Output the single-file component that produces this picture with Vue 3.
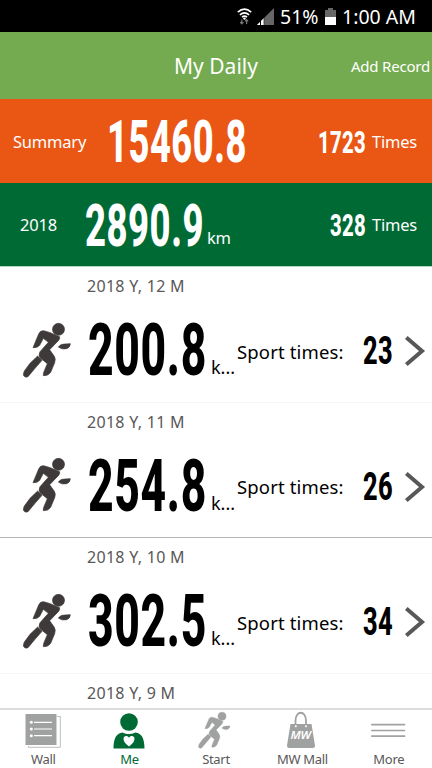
<template>
  <div class="screen">
    <div class="status-bar">
      <svg class="wifi" width="15" height="17" viewBox="0 0 15 17">
        <g fill="none" stroke="#fff" stroke-width="1.6">
          <path d="M0.8 4.2 Q7.5 -1.8 14.2 4.2" />
          <path d="M2.9 6.8 Q7.5 2.8 12.1 6.8" />
          <path d="M5 9.2 Q7.5 7.1 10 9.2" />
        </g>
        <circle cx="7.5" cy="10.6" r="1.2" fill="#fff" />
        <path d="M4.8 11.5V15.6M3.2 14L4.8 15.8L6.4 14M9.6 16V12M8 13.4L9.6 11.6L11.2 13.4" fill="none" stroke="#777" stroke-width="1.2" />
      </svg>
      <svg class="signal" width="17" height="17" viewBox="0 0 17 17">
        <path d="M0 17L17 0V17Z" fill="#666" />
        <path d="M0 17L8 9V17Z" fill="#fff" />
        <path d="M3.5 10V17M7.2 8V17" stroke="#000" stroke-width="1" />
      </svg>
      <span class="battery-level">51%</span>
      <svg class="battery" width="11" height="17" viewBox="0 0 11 17">
        <path d="M3 0H8V2H11V17H0V2H3Z" fill="#666" />
        <rect y="9" width="11" height="8" fill="#fff" />
      </svg>
      <span class="clock">1:00 AM</span>
    </div>

    <header class="header">
      <h1>My Daily</h1>
      <span class="add-record">Add Record</span>
    </header>

    <section v-for="total in totals" :key="total.label" :class="['total', total.theme]">
      <span class="total-label">{{ total.label }}</span>
      <svg class="total-distance" :width="total.width" height="44">
        <text x="0" y="43" :textLength="total.width" lengthAdjust="spacingAndGlyphs">{{ total.distance }}</text>
      </svg>
      <span class="total-unit">{{ total.unit }}</span>
      <svg class="total-count" :width="total.countWidth" height="25">
        <text x="0" y="24" :textLength="total.countWidth" lengthAdjust="spacingAndGlyphs">{{ total.count }}</text>
      </svg>
      <span class="total-times">Times</span>
    </section>

    <main class="months">
      <article v-for="month in months" :key="month.name" class="month">
        <h2>{{ month.name }}</h2>
        <div v-if="month.distance" class="month-body">
          <svg class="runner" width="48" height="55" viewBox="68 172 144 165">
            <circle cx="174.5" cy="191" r="18" />
            <path :d="runner" />
          </svg>
          <svg class="distance" width="119" height="54">
            <text x="0" y="53" textLength="119" lengthAdjust="spacingAndGlyphs">{{ month.distance }}</text>
          </svg>
          <span class="unit">k...</span>
          <span class="sport-times">Sport times:</span>
          <svg class="count" width="30" height="30">
            <text x="0" y="29" textLength="30" lengthAdjust="spacingAndGlyphs">{{ month.count }}</text>
          </svg>
          <svg class="chevron" width="20" height="30" viewBox="0 0 20 30">
            <path d="M1.3 1.5L17 15L1.3 28.5" />
          </svg>
        </div>
      </article>
    </main>

    <nav class="tabs">
      <a class="tab">
        <svg width="48" height="40" viewBox="0 0 48 40">
          <path d="M9.5 36V37.3H41.3V6.5H38" fill="none" stroke="#b5b5b5" stroke-width="0.9" />
          <rect x="6.5" y="4" width="31" height="31" />
          <path d="M15 12.3H33M15 19H33M15 25.7H33" stroke="#fff" stroke-width="1.2" />
          <g fill="#fff">
            <circle cx="12.3" cy="12.3" r="1.5" />
            <circle cx="12.3" cy="19" r="1.5" />
            <circle cx="12.3" cy="25.7" r="1.5" />
          </g>
        </svg>
        <span>Wall</span>
      </a>
      <a class="tab active">
        <svg width="48" height="40" viewBox="0 0 48 40">
          <circle cx="23" cy="12" r="8.8" />
          <path d="M7.5 38.5C7.5 27.5 11 23 16.5 22.5C21 24.5 25 24.5 29.5 22.5C35 23 38.5 27.5 38.5 38.5Z" />
          <path d="M23 36.5C19.5 34 17.5 31.5 17.5 28.8C17.5 25.3 21.8 25.3 23 27.8C24.2 25.3 28.5 25.3 28.5 28.8C28.5 31.5 26.5 34 23 36.5Z" fill="#fff" />
        </svg>
        <span>Me</span>
      </a>
      <a class="tab">
        <svg class="tab-runner" width="48" height="40" viewBox="0 0 48 40">
          <g transform="translate(-8.9 -36.3) scale(0.223)">
            <circle cx="174.5" cy="191" r="18" />
            <path :d="runner" />
          </g>
        </svg>
        <span>Start</span>
      </a>
      <a class="tab">
        <svg width="48" height="40" viewBox="0 0 48 40">
          <path d="M17.5 17V11C17.5 0 28 0 28 11V17" fill="none" stroke="#a0a1a1" stroke-width="1.8" />
          <path d="M12.5 14H33.5L37 35.5Q37 38 34.5 38H11.5Q9 38 9 35.5Z" />
          <circle cx="17.8" cy="16.2" r="1" fill="#fff" />
          <circle cx="28" cy="16.2" r="1" fill="#fff" />
          <text class="bag-text" x="12.5" y="29" textLength="20" lengthAdjust="spacingAndGlyphs">MW</text>
        </svg>
        <span>MW Mall</span>
      </a>
      <a class="tab">
        <svg width="48" height="40" viewBox="0 0 48 40">
          <path d="M6.2 14.7H40.2M6.2 20.5H40.2M6.2 26.2H40.2" stroke="#a0a1a1" stroke-width="1.7" />
        </svg>
        <span>More</span>
      </a>
    </nav>
  </div>
</template>

<script setup>
const totals = [
  { label: 'Summary', distance: '15460.8', width: 140, unit: '', count: '1723', countWidth: 48, theme: 'orange' },
  { label: '2018', distance: '2890.9', width: 119, unit: 'km', count: '328', countWidth: 36, theme: 'green' },
];

const months = [
  { name: '2018 Y, 12 M', distance: '200.8', count: '23' },
  { name: '2018 Y, 11 M', distance: '254.8', count: '26' },
  { name: '2018 Y, 10 M', distance: '302.5', count: '34' },
  { name: '2018 Y, 9 M' },
];

// body, front hand and back leg, the head is a separate circle
const runner =
  'M98 246L115 205Q119 194 130 195L150 201L157 204L178 213Q179 220 174 225L148 252L162 272Q167 280 163 291L151 320Q144 331 129 330Q128 323 132 315L141 294L120 277Q113 269 119 258L144 230L129 218L118 239Q111 248 98 246Z' +
  'M174 244Q181 234 194 235L210 234Q210 245 199 249Q185 253 174 244Z' +
  'M112 271L125 284L104 308L83 333Q75 337 70 330Q68 325 72 316L89 293Z';
</script>

<style>
body {
  background: #fff;
}
</style>

<style scoped>
.screen {
  width: 432px;
  height: 768px;
  display: flex;
  flex-direction: column;
  overflow: hidden;
  background: #fff;
  font-family: "Noto Sans", sans-serif;
}

svg {
  flex: none;
  overflow: visible;
}

.status-bar {
  height: 32px;
  flex: none;
  display: flex;
  align-items: center;
  box-sizing: border-box;
  padding-left: 237px;
  background: #000;
  color: #fff;
  font-size: 19.5px;
  white-space: nowrap;
}

.signal {
  margin: 0 6px 0 5px;
}

.battery-level {
  width: 41px;
}

.battery {
  margin: 0 6px 0 4px;
}

.header {
  height: 67px;
  flex: none;
  display: grid;
  grid-template-columns: 1fr auto 1fr;
  align-items: center;
  background: #74ab50;
  color: #fff;
}

.header h1 {
  grid-column: 2;
  margin: 0;
  font-size: 21px;
  font-weight: 400;
}

.add-record {
  justify-self: end;
  padding-right: 2px;
  font-size: 15px;
  letter-spacing: -0.2px;
}

.total {
  flex: none;
  display: flex;
  align-items: center;
  box-sizing: border-box;
  padding-right: 15px;
  color: #fff;
  font-size: 16.5px;
  letter-spacing: -0.2px;
}

.total text,
.month text {
  font-family: Roboto, sans-serif;
  font-weight: 800;
  letter-spacing: 0.015em;
  fill: currentColor;
}

.orange {
  height: 84px;
  padding-left: 13px;
  background: #ea5614;
}

.green {
  height: 83px;
  padding-left: 20px;
  background: #006a35;
}

.orange .total-label {
  width: 94px;
}

.green .total-label {
  width: 65px;
}

.total-distance {
  font-size: 59px;
}

.total-unit {
  flex: 1;
  padding: 26px 0 0 3px;
}

.total-count {
  margin-right: 6px;
  font-size: 32px;
}

.months {
  flex: 1;
  min-height: 0;
  overflow: hidden;
}

.month {
  height: 135.5px;
  box-sizing: border-box;
  border-top: 1px solid #f5f5f5;
}

.month:first-child {
  border-top-color: #b5d6c5;
}

.month:nth-child(3) {
  border-top-color: #b5b5b5;
}

.month h2 {
  margin: 0;
  padding: 7px 0 0 87px;
  color: #595757;
  font-size: 16px;
  line-height: 24px;
  font-weight: 400;
  letter-spacing: 0.3px;
}

.month-body {
  display: flex;
  align-items: center;
  height: 56px;
  padding: 24px 0 0 23px;
}

.runner {
  fill: #3e3a39;
  stroke: #3e3a39;
  stroke-width: 2;
}

.distance {
  margin: -2px 0 0 17px;
  font-size: 72px;
}

.unit {
  width: 30px;
  box-sizing: border-box;
  padding: 34px 0 0 4px;
  font-size: 18px;
}

.sport-times {
  width: 108px;
  margin-right: 18px;
  padding-top: 2px;
  font-size: 18.5px;
  letter-spacing: 0.15px;
  white-space: nowrap;
}

.count {
  font-size: 39px;
}

.chevron {
  margin: 2px 0 0 12px;
  fill: none;
  stroke: #595757;
  stroke-width: 4;
}

.tabs {
  height: 60px;
  flex: none;
  display: grid;
  grid-template-columns: repeat(5, 1fr);
  box-sizing: border-box;
  border-top: 2px solid #dcdcdc;
  background: #fff;
}

.tab {
  display: flex;
  flex-direction: column;
  align-items: center;
  color: #595757;
  font-size: 13px;
  line-height: 18px;
  letter-spacing: -0.3px;
}

.tab svg {
  fill: #a0a1a1;
}

.tab-runner {
  stroke: #a0a1a1;
  stroke-width: 2;
}

.tab.active {
  color: #006a35;
}

.tab.active svg {
  fill: #006a35;
}

.tab .bag-text {
  fill: #fff;
  font-size: 10px;
  font-style: italic;
  font-weight: 600;
}
</style>
